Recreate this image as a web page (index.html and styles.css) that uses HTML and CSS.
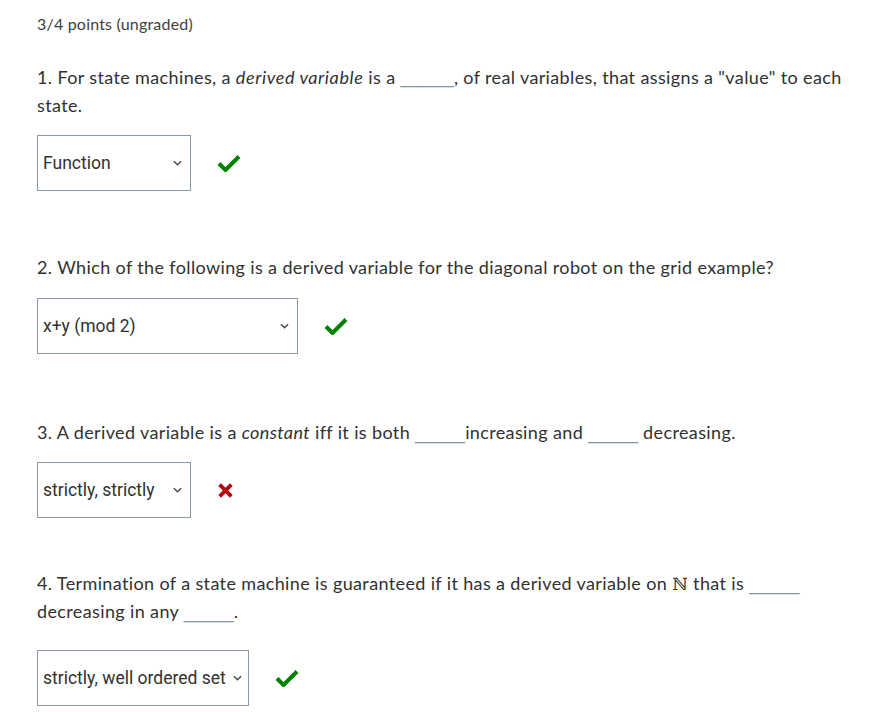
FILE: index.html
```html
<!DOCTYPE html>
<html>
<head>
<meta charset="utf-8">
<link rel="stylesheet" href="styles.css">
</head>
<body>
<div class="problem">
  <div class="points">3/4 points (ungraded)</div>

  <p class="q q1">1. For state machines, a <em>derived variable</em> is a <span class="blank b6">______</span>, of real variables, that assigns a "value" to each state.</p>
  <div class="answer a1">
    <div class="select w1"><span>Function</span><svg class="chev" viewBox="0 0 10 6"><path d="M1 1l4 4 4-4" fill="none" stroke="#414b52" stroke-width="1.6"/></svg></div>
    <svg class="ok" viewBox="0 0 24 18"><path d="M2 9.5l6.5 6.5L22 2.5" fill="none" stroke="#008100" stroke-width="4"/></svg>
  </div>

  <p class="q q2">2. Which of the following is a derived variable for the diagonal robot on the grid example?</p>
  <div class="answer a2">
    <div class="select w2"><span>x+y (mod 2)</span><svg class="chev" viewBox="0 0 10 6"><path d="M1 1l4 4 4-4" fill="none" stroke="#414b52" stroke-width="1.6"/></svg></div>
    <svg class="ok" viewBox="0 0 24 18"><path d="M2 9.5l6.5 6.5L22 2.5" fill="none" stroke="#008100" stroke-width="4"/></svg>
  </div>

  <p class="q q3">3. A derived variable is a <em>constant</em> iff it is both <span class="blank">_____</span>increasing and <span class="blank">_____</span> decreasing.</p>
  <div class="answer a3">
    <div class="select w3"><span>strictly, strictly</span><svg class="chev" viewBox="0 0 10 6"><path d="M1 1l4 4 4-4" fill="none" stroke="#414b52" stroke-width="1.6"/></svg></div>
    <svg class="bad" viewBox="0 0 16 16"><path d="M2.5 2.5l11 11M13.5 2.5l-11 11" fill="none" stroke="#b20610" stroke-width="3.6"/></svg>
  </div>

  <p class="q q4">4. Termination of a state machine is guaranteed if it has a derived variable on <span class="nn">ℕ</span> that is <span class="blank">_____</span> decreasing in any <span class="blank">_____</span>.</p>
  <div class="answer a4">
    <div class="select w4"><span>strictly, well ordered set</span><svg class="chev c4" viewBox="0 0 10 6"><path d="M1 1l4 4 4-4" fill="none" stroke="#414b52" stroke-width="1.6"/></svg></div>
    <svg class="ok" viewBox="0 0 24 18"><path d="M2 9.5l6.5 6.5L22 2.5" fill="none" stroke="#008100" stroke-width="4"/></svg>
  </div>
</div>
</body>
</html>
```
FILE: styles.css
```css
html, body {
  margin: 0;
  padding: 0;
  background: #fff;
}
body {
  font-family: Lato, "Open Sans", sans-serif;
  color: #313131;
}
.problem {
  padding: 12px 20px 0 37px;
  width: 878px;
  box-sizing: border-box;
}
.points {
  font-size: 16px;
  line-height: 24px;
  color: #414141;
  letter-spacing: 0.2px;
}
.q {
  margin: 0;
  font-size: 18px;
  line-height: 28px;
  letter-spacing: 0.37px;
  color: #313131;
}
.q1 { margin-top: 27px; }
.q2 { margin-top: 62px; }
.q3 { margin-top: 64px; }
.q4 { margin-top: 51px; }
.q1 em { letter-spacing: 0.6px; }
.blank {
  font-family: "Liberation Sans", Arial, sans-serif;
  color: #8595a0;
  letter-spacing: 0;
  line-height: 0;
}
.b6 { font-size: 16px; }
.nn { font-family: "DejaVu Serif", serif; font-size: 17px; line-height: 0; }
.answer {
  display: flex;
  align-items: center;
  height: 56px;
}
.a1 { margin-top: 16px; }
.a2 { margin-top: 17px; }
.a3 { margin-top: 16px; }
.a4 { margin-top: 25px; }
.select {
  box-sizing: border-box;
  height: 56px;
  border: 1px solid #8b9aa6;
  display: flex;
  align-items: center;
  justify-content: space-between;
  padding: 0 5px 0 5px;
  font-family: Roboto, "Liberation Sans", sans-serif;
  font-size: 17.5px;
  color: #313131;
}
.w1 { width: 154px; }
.w2 { width: 261px; }
.w3 { width: 154px; }
.w4 { width: 212px; }
.chev { width: 9px; height: 6px; margin-right: 3px; flex-shrink: 0; }
.c4 { margin-right: 1px; }
.ok { width: 24px; height: 18px; margin-left: 26px; }
.bad { width: 17px; height: 17px; margin-left: 26px; }
```
